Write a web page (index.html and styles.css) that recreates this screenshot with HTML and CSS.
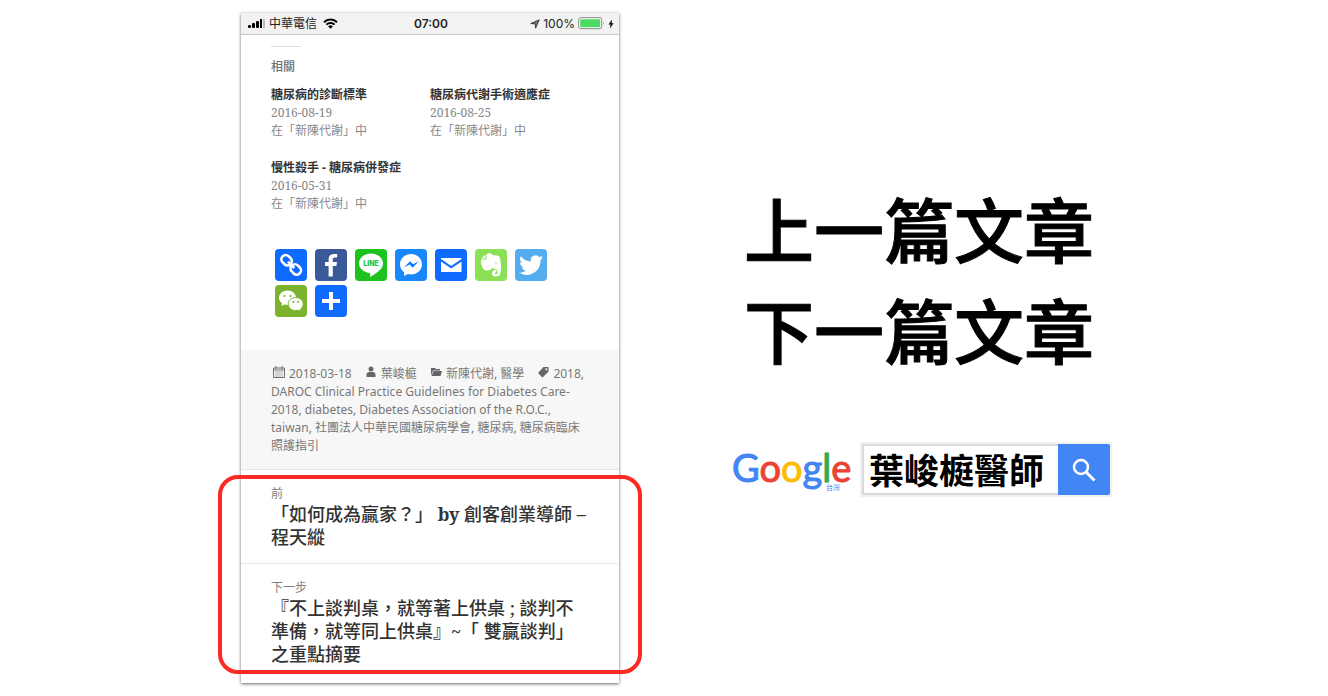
FILE: index.html
```html
<!DOCTYPE html>
<html lang="zh-Hant">
<head>
<meta charset="utf-8">
<title>上一篇文章 下一篇文章</title>
<link rel="stylesheet" href="styles.css">
</head>
<body>
<main class="slide">
  <section class="phone">
    <header class="status">
      <div class="status-side">
        <svg class="signal" width="17" height="10" viewBox="0 0 17 10"><rect x="0" y="6" width="3" height="3" rx="1"/><rect x="4" y="4" width="3" height="5" rx="1"/><rect x="8" y="2" width="3" height="7" rx="1"/><rect x="12" y="0" width="2" height="9"/><rect x="15" y="0" width="2" height="9" fill="#bbb"/></svg>
        <span>中華電信</span>
        <svg class="wifi" width="15" height="11" viewBox="0 0 15 11"><path d="M1 4.2a9.2 9.2 0 0 1 13 0M3.4 6.6a5.8 5.8 0 0 1 8.2 0" fill="none" stroke="#000" stroke-width="2"/><path d="M5.2 8.4a3.2 3.2 0 0 1 4.6 0L7.5 10.8z"/></svg>
      </div>
      <strong class="clock">07:00</strong>
      <div class="status-side status-right">
        <svg width="10" height="10" viewBox="0 0 10 10"><path d="M9.2.8 5.600 9.2 5.200 4.800 .8 4.500z" fill="#777" stroke="#333" stroke-width=".9"/></svg>
        <span>100%</span>
        <svg width="27" height="13" viewBox="0 0 27 13"><rect x=".7" y=".7" width="23" height="11" rx="2" fill="#fff" stroke="#888"/><rect x="2.2" y="2.2" width="20" height="8" rx="1" fill="#4cd964"/><path d="M25 4.5q1.5 1.700 0 3.600z" fill="#999"/></svg>
        <svg width="6" height="10" viewBox="0 0 6 10"><path d="M4 .5.500 5.500h2L1.800 9.500l3.800-5.300h-2z"/></svg>
      </div>
    </header>

    <article class="related">
      <hr class="rule">
      <h2 class="related-title">相關</h2>
      <div class="related-grid">
        <div class="post"><a href="#">糖尿病的診斷標準</a><time>2016-08-19</time><p>在「新陳代謝」中</p></div>
        <div class="post"><a href="#">糖尿病代謝手術適應症</a><time>2016-08-25</time><p>在「新陳代謝」中</p></div>
        <div class="post"><a href="#">慢性殺手 - 糖尿病併發症</a><time>2016-05-31</time><p>在「新陳代謝」中</p></div>
      </div>
      <nav class="share">
        <a href="#" class="tile blue" aria-label="Copy link"><svg viewBox="0 0 32 32"><g fill="none" stroke="#fff" stroke-width="2.600" transform="rotate(45 16 16)"><rect x="4" y="11.500" width="11" height="8.500" rx="4"/><rect x="17" y="11.500" width="11" height="8.500" rx="4"/><path d="M11.500 15.800h9"/></g></svg></a>
        <a href="#" class="tile facebook" aria-label="Facebook"><svg viewBox="0 0 32 32"><path fill="#fff" d="M17.8 27.500V17h3.600l.6-4h-4.200v-2.500c0-1.200.5-2 2.100-2H22.200V5.100C21.600 5 20.400 4.900 19 4.900c-3.300 0-5.400 1.900-5.400 5.400V13H10v4h3.600v10.500z"/></svg></a>
        <a href="#" class="tile line" aria-label="LINE"><svg viewBox="0 0 32 32"><path fill="#fff" d="M28 14.300C28 8.900 22.600 4.600 16 4.600S4 8.900 4 14.300c0 4.800 4.300 8.900 10.100 9.600 1.400.3 1.200 1 .9 3.200 0 .5-.1 1 .9.500 2.600-1.400 7.300-4.500 9.900-7.500 1.500-1.700 2.200-3.600 2.200-5.800z"/><text class="line-word" x="16" y="17" text-anchor="middle">LINE</text></svg></a>
        <a href="#" class="tile messenger" aria-label="Messenger"><svg viewBox="0 0 32 32"><path fill="#fff" d="M16 5C9.900 5 5 9.600 5 15.300c0 3.200 1.600 6.100 4.100 8V27l3.700-2c1 .3 2.100.4 3.200.4 6.100 0 11-4.500 11-10.200S22.100 5 16 5z"/><path fill="#0a7cff" d="m9 18.600 6-6.400 3.100 3.100 5.700-3.100-6.200 6.500-3-3.100z"/></svg></a>
        <a href="#" class="tile blue" aria-label="Email"><svg viewBox="0 0 32 32"><path fill="#fff" d="M6 9h20.500v1L16.200 17 6 10zM6 12.500l10.200 7 10.300-7V23H6z"/></svg></a>
        <a href="#" class="tile evernote" aria-label="Evernote"><svg viewBox="0 0 32 32"><path fill="#fff" d="M11.500 5.200c2-1.500 5-1 6 .8 2 .1 5.200.5 6.500 1.300 2.200 2.500 2.800 14.500.8 18.500-1.500 2.500-7 2.400-7.700-.5-.6-3.300 1.600-4.600 4.200-4.300v2.200c-1.700-.1-2.100 1.600-.5 1.900 2 .4 2-2.600 1.200-4.100-1.200-1.500-4-.5-4.800-2.500-1 3.500-6 3.500-8.500 2C6.800 18.500 5.600 13 6.200 10.500h4.600c.7 0 .8-.4.8-1z"/><path fill="#fff" d="M10.500 5.500v4H6.300z"/><path fill="#8be056" d="M20 14.500q.7-2.400 2.600 0-1.300-.5-2.600 0z"/></svg></a>
        <a href="#" class="tile twitter" aria-label="Twitter"><svg viewBox="0 0 32 32"><path fill="#fff" d="M28 8.600a9.900 9.900 0 0 1-2.800.8 4.900 4.900 0 0 0 2.200-2.700c-1 .5-2 1-3.100 1.200a4.900 4.900 0 0 0-8.400 4.500A14 14 0 0 1 5.700 7.200a4.900 4.900 0 0 0 1.500 6.600 4.900 4.900 0 0 1-2.200-.6 4.900 4.900 0 0 0 4 4.900 5 5 0 0 1-2.200.1 4.900 4.900 0 0 0 4.600 3.400A9.900 9.900 0 0 1 4 23.600a14 14 0 0 0 21.500-12.400c1-.7 1.900-1.600 2.500-2.600z"/></svg></a>
        <a href="#" class="tile wechat" aria-label="WeChat"><svg viewBox="0 0 32 32"><path fill="#fff" d="M12.500 5.500C7.800 5.500 4 8.700 4 12.800c0 2.300 1.200 4.200 3.100 5.600l-.8 2.500 3-1.500c1.100.3 2.100.5 3.200.5 4.700 0 8.500-3.200 8.500-7.200s-3.800-7.200-8.500-7.200z"/><path fill="#fff" stroke="#7bb32e" d="M20.700 12.500c-4.300 0-7.500 2.900-7.500 6.500s3.200 6.600 7.500 6.600c1 0 1.800-.2 2.700-.5l2.700 1.400-.7-2.300c1.700-1.300 2.800-3 2.800-5.200 0-3.600-3.300-6.500-7.500-6.500z"/><g fill="#7bb32e"><circle cx="9.500" cy="11" r="1.100"/><circle cx="15.400" cy="11" r="1.100"/><circle cx="18.300" cy="17" r="1"/><circle cx="23" cy="17" r="1"/></g></svg></a>
        <a href="#" class="tile blue" aria-label="Share"><svg viewBox="0 0 32 32"><path fill="#fff" d="M14 7h4v7h7v4h-7v7h-4v-7H7v-4h7z"/></svg></a>
      </nav>
    </article>

    <footer class="meta">
      <span class="meta-item"><svg class="meta-icon" viewBox="0 0 12 12"><path d="M.5 2h11v9.500H.5zM.5 4h11" fill="none" stroke="#707070"/><path d="M3 0v3M9 0v3" stroke="#707070"/><path d="M2.500 6h7M2.500 8h7M2.500 10h7" stroke="#707070" stroke-dasharray="1 1"/></svg>2018-03-18</span>
      <span class="meta-item"><svg class="meta-icon" viewBox="0 0 12 12"><circle cx="6" cy="3" r="2.500"/><path d="M1.500 11V9q0-3 3-3h3q3 0 3 3v2z"/></svg>葉峻榳</span>
      <span class="meta-item"><svg class="meta-icon" viewBox="0 0 12 12"><path d="M1 9V2h4l1 1h4v1.500H3L1.500 8.500z"/><path d="M3.500 5H12l-1.500 5h-9z"/></svg>新陳代謝, 醫學</span>
      <span class="meta-tags"><svg class="meta-icon" viewBox="0 0 12 12"><path fill-rule="evenodd" d="M6.500 1H11.500v4.500L5.500 11.500 1 7zM9.200 2.200a1 1 0 1 0 .1 0z"/></svg>2018, DAROC Clinical Practice Guidelines for Diabetes Care-<wbr>2018, diabetes, Diabetes Association of the R.O.C., taiwan, 社團法人中華民國糖尿病學會, 糖尿病, 糖尿病臨床照護指引</span>
    </footer>

    <nav class="pager">
      <a href="#" class="page-link"><span class="page-label">前</span><span class="page-title">「如何成為贏家？」 <b>by</b> 創客創業導師 – 程天縱</span></a>
      <a href="#" class="page-link"><span class="page-label">下一步</span><span class="page-title">『不上談判桌，就等著上供桌 ; 談判不準備，就等同上供桌』~「 雙贏談判」之重點摘要</span></a>
      <span class="highlight"></span>
    </nav>
  </section>

  <section class="caption">
    <h1 class="headline"><span>上一篇文章</span><span>下一篇文章</span></h1>
    <form class="search">
      <div class="logo"><span class="g-blue">G</span><span class="g-red">o</span><span class="g-yellow">o</span><span class="g-blue">g</span><span class="g-green">l</span><span class="g-red">e</span><small class="region">台灣</small></div>
      <div class="search-box">
        <input class="query" type="text" value="葉峻榳醫師" aria-label="搜尋">
        <button class="go" type="button" aria-label="Google 搜尋"><svg width="26" height="26" viewBox="0 0 26 26"><circle cx="10" cy="10" r="7" fill="none" stroke="#fff" stroke-width="2.500"/><path d="m15 15 8.500 8.500" stroke="#fff" stroke-width="3"/></svg></button>
      </div>
    </form>
  </section>
</main>
</body>
</html>
```
FILE: styles.css
```css
* { box-sizing: border-box; }
body {
  margin: 0;
  background: #fff;
  color: #333;
  font-family: "Noto Sans", "Noto Sans CJK TC", sans-serif;
}
a { color: inherit; text-decoration: none; }
p, h1, h2 { margin: 0; }
.slide {
  display: flex;
  align-items: flex-start;
  padding: 13px 216px 12px 241px;
  gap: 113px;
}
.phone {
  flex: 0 0 378px;
  background: #fff;
  box-shadow: 0 1px 3px #666;
}
.status {
  display: flex;
  align-items: center;
  height: 22px;
  padding: 0 5px 0 7px;
  background: #f2f2f2;
  border-bottom: 1px solid #c8c8c8;
  color: #222;
  font: 12px/20px Inter, "Noto Sans CJK TC", sans-serif;
}
.status-side { display: flex; flex: 1; align-items: center; gap: 4px; }
.status-side .wifi { margin-left: 2px; }
.status-right { justify-content: flex-end; gap: 3px; }
.clock { font-weight: 600; }
.related { padding: 11px 30px 33px; }
.rule { width: 30px; height: 1px; margin: 0; border: 0; background: #ddd; }
.related-title { margin: 11px 0 10px; font-size: 12px; line-height: 18px; font-weight: 500; color: #707070; }
.related-grid {
  display: grid;
  grid-template-columns: 1fr 1fr;
  row-gap: 19px;
  font-size: 12px;
  line-height: 18px;
  color: #888;
}
.post a { display: block; color: #333; font-weight: 700; white-space: nowrap; }
.post time { display: block; font-family: "Noto Serif", "Liberation Serif", serif; font-size: 12px; }
.share { display: flex; flex-wrap: wrap; gap: 4px 8px; padding: 36px 4px 0; }
.tile { width: 32px; height: 32px; border-radius: 4px; }
.tile svg { display: block; width: 32px; height: 32px; }
.blue { background: #0f6bff; }
.facebook { background: #3b5998; }
.line { background: #1dc31d; }
.messenger { background: #1787fb; }
.evernote { background: #8be056; }
.twitter { background: #55acee; }
.wechat { background: #7bb32e; }
.line-word { font: 800 7px Inter, sans-serif; fill: #1dc31d; }
.meta {
  padding: 15px 30px 14px;
  background: #f7f7f7;
  border-bottom: 1px solid #e8e8e8;
  color: #777;
  font-size: 12px;
  line-height: 18px;
}
.meta-item { margin-right: 8px; }
.meta-icon { width: 12px; height: 12px; margin: 0 4px 0 2px; fill: #666; }
.pager { position: relative; }
.page-link { display: block; padding: 15px 30px 14px; }
.page-link + .page-link { border-top: 1px solid #e8e8e8; padding-bottom: 17px; }
.page-label { display: block; font-size: 12px; line-height: 18px; color: #808080; }
.page-title {
  display: block;
  font: 500 18px/23px "Noto Serif", "Liberation Serif", "Noto Sans CJK TC", serif;
  color: #333;
}
.highlight {
  position: absolute;
  inset: 5px -23px 9px;
  border: 4px solid #fb2a25;
  border-radius: 20px;
  pointer-events: none;
}
.caption { flex: 1; min-width: 0; padding-top: 164px; }
.headline {
  padding-left: 12px;
  color: #000;
  font: 500 70px/101px "Noto Sans CJK TC", sans-serif;
  -webkit-text-stroke: 1px #000;
}
.headline span { display: block; white-space: nowrap; }
.search { display: flex; align-items: center; margin-top: 63px; }
.logo {
  position: relative;
  flex: 0 0 128px;
  padding-bottom: 6px;
  font: 38px/48px Lato, sans-serif;
  -webkit-text-stroke: 1px currentColor;
  white-space: nowrap;
}
.g-blue { color: #4285f4; }
.g-red { color: #ea4335; }
.g-yellow { color: #fbbc05; }
.g-green { color: #34a853; }
.region { position: absolute; right: 20px; bottom: 5px; color: #4285f4; font: 7px/10px "Noto Sans CJK TC", sans-serif; -webkit-text-stroke: 0; }
.search-box { display: flex; flex: 1; min-width: 0; height: 55px; padding: 2px; background: #f1f1f1; }
.query {
  flex: 1;
  min-width: 0;
  padding: 0 5px 2px;
  border: 2px solid #d9d9d9;
  border-right: 0;
  background: #fff;
  color: #000;
  font: 700 35px/45px "Noto Sans CJK TC", sans-serif;
}
.go { flex: 0 0 52px; padding: 0; border: 0; border-radius: 0 2px 2px 0; background: #4285f4; }
.go svg { display: block; margin: auto; }
```
